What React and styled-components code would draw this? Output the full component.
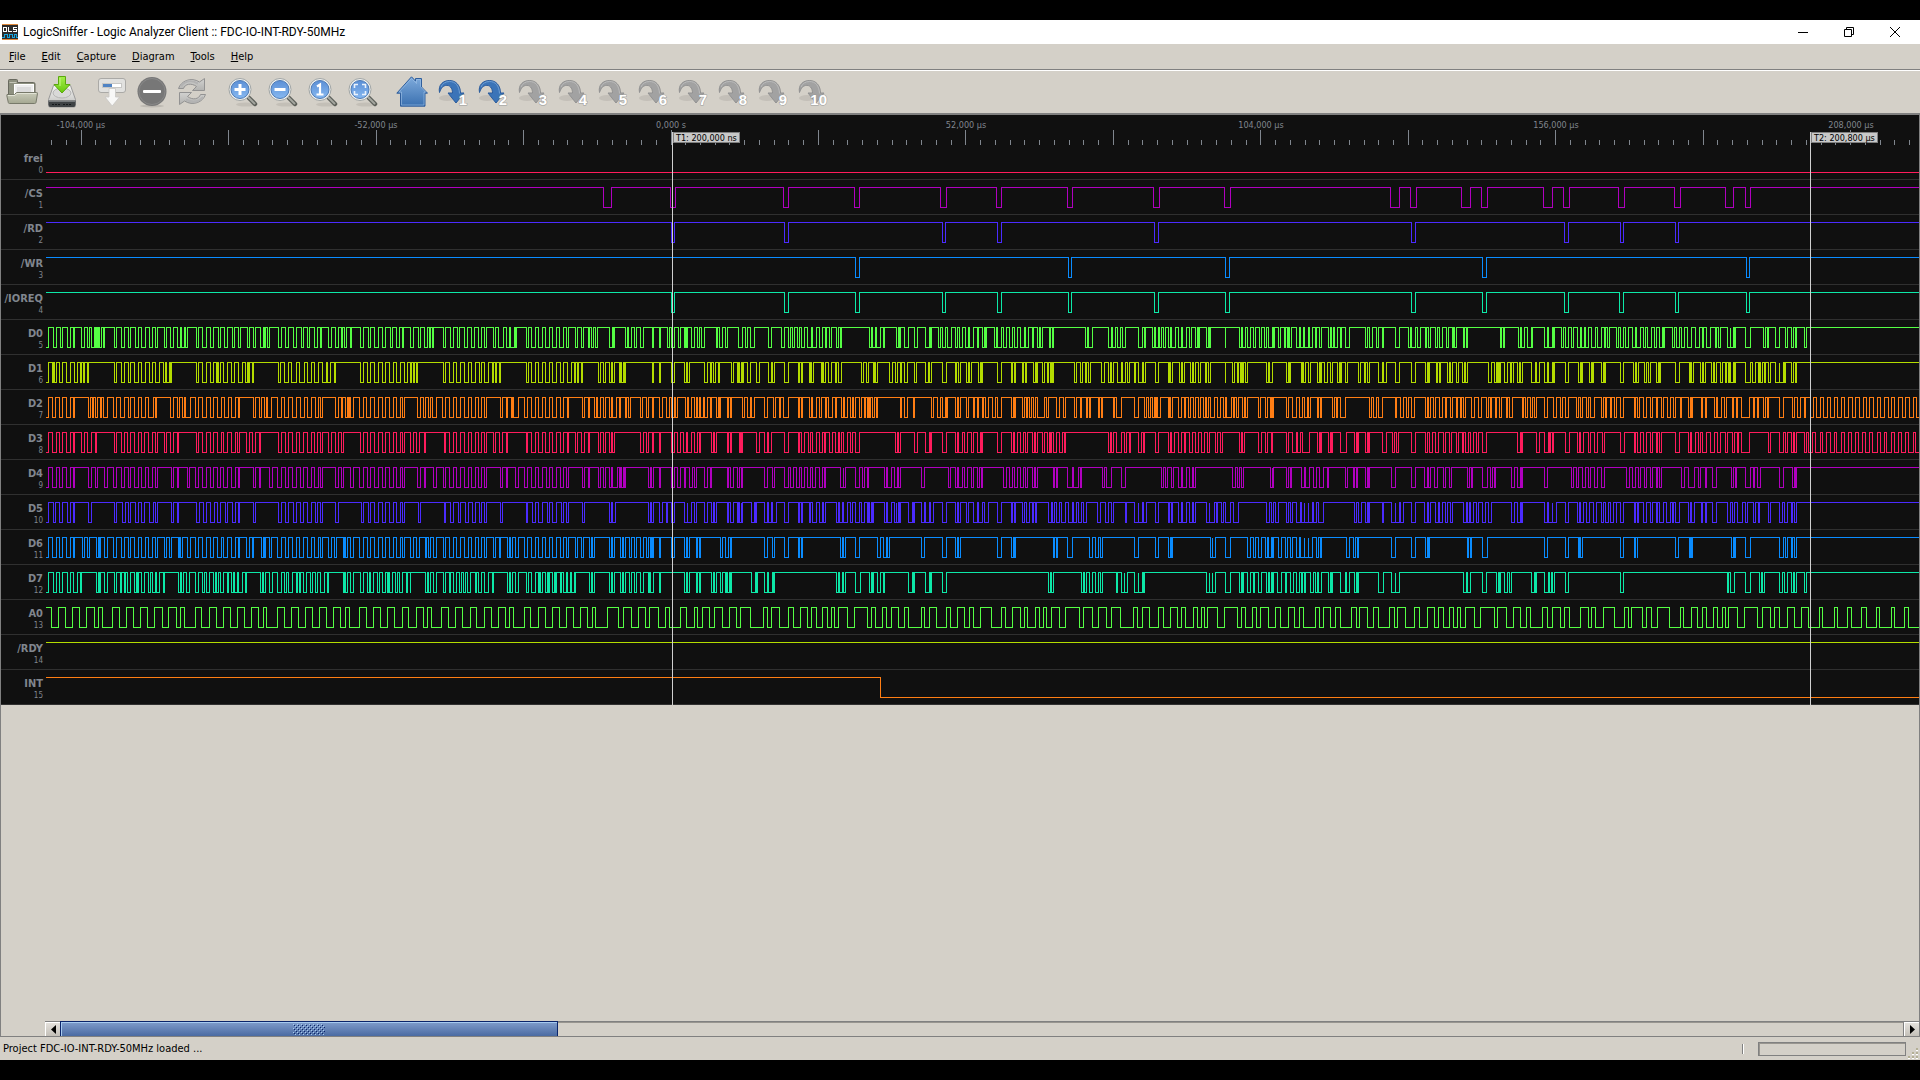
import React from 'react';
import styled, { createGlobalStyle } from 'styled-components';

const GlobalStyle = createGlobalStyle`
  * {
    box-sizing: border-box;
  }

  body {
    margin: 0;
    background: #000;
    font-family: 'DejaVu Sans Condensed', 'DejaVu Sans', sans-serif;
    font-size: 11px;
    color: #000;
  }
`;

const Screen = styled.div`
  display: flex;
  flex-direction: column;
  min-height: 100vh;
  padding: 20px 0;
`;

const Window = styled.div`
  display: flex;
  flex-direction: column;
  flex: 1;
  background: #d4d0c8;
  overflow: hidden;
`;

const TitleBar = styled.header`
  display: flex;
  align-items: center;
  height: 24px;
  padding: 0 2px;
  background: #fff;
`;

const Title = styled.h1`
  flex: 1;
  margin: 0 0 0 5px;
  font-family: Roboto, sans-serif;
  font-size: 12px;
  font-weight: 400;
`;

const WindowButton = styled.button`
  display: flex;
  align-items: center;
  justify-content: center;
  width: 46px;
  height: 20px;
  padding: 0;
  border: 0;
  background: none;
`;

const MenuBar = styled.nav`
  display: flex;
  align-items: center;
  height: 25px;
  padding: 0 1px;
`;

const MenuItem = styled.button`
  padding: 0 8px;
  border: 0;
  background: none;
  font: inherit;
  color: inherit;
`;

const ToolBar = styled.div`
  display: flex;
  align-items: center;
  height: 46px;
  padding: 0 2px;
  border-top: 1px solid #808080;
  border-bottom: 2px solid #808080;
  box-shadow: inset 0 1px 0 #fff;
`;

const ToolButton = styled.button`
  display: flex;
  justify-content: center;
  width: 40px;
  height: 32px;
  padding: 0;
  margin-right: ${({ $last }) => ($last ? 10 : 0)}px;
  border: 0;
  background: none;
`;

const Viewer = styled.main`
  display: flex;
  flex-direction: column;
  flex: 1;
  border: solid #808080;
  border-width: 0 1px 1px;
`;

const Scope = styled.section`
  position: relative;
  background: #101010;
  color: #80868e;
`;

const RulerSvg = styled.svg`
  display: block;
  width: 100%;
  height: 30px;
  font-size: 9px;
  fill: #80868e;
`;

const Channel = styled.div`
  display: flex;
  height: 35px;
  border-bottom: 1px solid #303030;
`;

const ChannelLabel = styled.div`
  display: flex;
  flex-direction: column;
  flex: none;
  align-items: flex-end;
  width: 45px;
  padding: 7px 3px 0 0;
`;

const ChannelName = styled.span`
  font-size: 11px;
  font-weight: 700;
  line-height: 14px;
`;

const ChannelIndex = styled.span`
  font-size: 8px;
  line-height: 10px;
`;

const Trace = styled.svg`
  flex: 1;
  min-width: 0;
  height: 34px;
  fill: none;
  stroke: ${({ $color }) => $color};
`;

const Cursor = styled.div`
  position: absolute;
  top: 17px;
  bottom: 0;
  left: ${({ $x }) => $x}px;
  border-left: 1px solid #d0d0d0;
`;

const CursorFlag = styled.div`
  height: 11px;
  padding: 0 2px;
  border: 1px solid #808080;
  background: #c8c8c8;
  color: #000;
  font-size: 9px;
  line-height: 11px;
  white-space: nowrap;
`;

const ScrollBar = styled.div`
  display: flex;
  height: 15px;
  margin: auto 0 0 44px;
  background: #d4d0c8;
  border-top: 1px solid #808080;
`;

const ScrollButton = styled.button`
  display: flex;
  align-items: center;
  justify-content: center;
  flex: none;
  width: 15px;
  padding: 0;
  border: 0;
  border-top: 1px solid #fff;
  border-left: 1px solid #fff;
  background: linear-gradient(#e4e1dc, #c4c0b8);
`;

const ScrollTrack = styled.div`
  flex: 1;
  border-top: 1px solid #98958f;
  border-right: 1px solid #808080;
`;

const ScrollThumb = styled.div`
  display: flex;
  align-items: center;
  justify-content: center;
  width: 27%;
  height: 15px;
  margin-top: -2px;
  border: 1px solid #0a246a;
  border-bottom: 0;
  box-shadow: inset 1px 1px 0 #a6caf0;
  background: linear-gradient(#7f9ccb, #4a6aa2);
`;

const StatusBar = styled.footer`
  display: flex;
  align-items: center;
  height: 23px;
  padding-left: 3px;
`;

const StatusText = styled.span`
  flex: 1;
`;

const StatusDivider = styled.span`
  width: 2px;
  height: 10px;
  margin-right: 14px;
  border-left: 1px solid #808080;
  background: #fff;
`;

const ProgressBox = styled.div`
  width: 148px;
  height: 14px;
  border: 1px solid #808080;
  box-shadow: inset 1px 1px 0 #98958f;
`;

const COLORS = ['#ff1c5c', '#b000c0', '#4b2bff', '#0a8cff', '#0de8a8', '#55ff44', '#b4dc00', '#ff7e14'];

const LABEL_WIDTH = 46;
const HIGH = 7.5;
const LOW = 27.5;
const TRACE_END = 1919;

// The capture comes in chunks: first pixel of the chunk and its samples per pixel.
const CHUNKS = {
  a: { start: 0, rate: 3 },
  b: { start: 480, rate: 3 },
  c: { start: 960, rate: 3 },
  d: { start: 1440, rate: 3 },
  w: { start: 960, rate: 49 / 30 },
};

// Every "fall-rise" pair is one low pulse, in samples from the start of its chunk.
const CHANNELS = [
  { name: 'frei', a: '138-5760' },
  {
    name: '/CS',
    b: '370-395 571-586 910-926 1123-1138 1381-1399',
    c: '109-125 322-338 580-599 793-812 1291-1319 1351-1370',
    d: '64-90 124-142 310-338 370-389 535-554 703-720 856-881 916-932',
  },
  {
    name: '/RD',
    b: '574-584 913-926 1386-1397',
    c: '112-124 583-596 1354-1366',
    d: '373-386 541-551 706-716',
  },
  { name: '/WR', b: '1126-1139', c: '325-335 796-809', d: '127-139 919-929' },
  {
    name: '/IOREQ',
    b: '574-584 913-926 1126-1139 1386-1397',
    c: '112-124 325-335 583-595 796-808 1354-1366',
    d: '127-139 373-386 538-551 706-716 919-929',
  },
  {
    name: 'D0',
    a: '138-145 161-169 180-187 203-210 221-223 245-252 263-267 275-283 286-289 292-296 299-304 310-314 343-349 365-374 385-391 405-415 425-435 447-457 467-471 493-498 511-520 533-541 544-553 556-562 589-595 608-619 630-640 655-660 672-682 696-703 715-720 742-748 760-766 780-789 793-797 802-808 835-844 856-865 880-889 904-911 922-928 943-952 961-965 985-993 1007-1014 1024-1028 1032-1038 1050-1054 1082-1090 1105-1111 1124-1135 1147-1156 1172-1177 1190-1198 1207-1211 1232-1240 1255-1262 1273-1282 1287-1291 1296-1301 1330-1336 1351-1361 1372-1378 1394-1403 1415-1424 1436-1440',
    b: '0-4 14-19 40-46 55-69 80-88 92-103 107-109 139-145 155-166 176-187 197-208 218-229 239-250 260-266 286-292 305-311 325-329 335-339 347-353 388-396 399-403 436-442 445-454 463-469 481-489 517-521 538-542 563-568 575-583 596-601 613-617 620-623 634-642 652-657 665-673 709-713 717-727 736-742 776-787 797-802 811-823 866-875 905-913 925-931 937-943 952-958 964-973 983-995 998-1009 1018-1026 1036-1040 1048-1054 1069-1075 1080-1084 1168-1173 1177-1186 1189-1201 1210-1213 1249-1255 1258-1262 1274-1285 1303-1311 1337-1348 1352-1354 1375-1381 1387-1397 1403-1413 1427-1433 1438-1440',
    c: '0-7 16-24 28-40 52-55 67-73 76-79 104-108 112-124 130-138 148-158 162-172 181-193 196-205 217-220 232-238 241-247 268-272 277-281 376-382 385-397 446-453 457-465 472-482 486-496 535-547 552-555 576-582 586-595 599-603 609-615 624-630 635-646 656-664 667-679 689-694 706-712 716-719 739-745 748-752 795-797 838-844 847-857 861-871 881-887 897-904 913-920 925-936 941-943 955-961 973-977 981-986 989-995 1009-1018 1021-1031 1034-1045 1049-1057 1066-1070 1077-1084 1105-1111 1114-1121 1124-1132 1141-1145 1157-1169 1217-1222 1229-1236 1250-1256 1267-1271 1306-1318 1346-1352 1355-1366 1372-1381 1395-1400 1405-1412 1427-1431 1437-1440',
    d: '0-7 19-25 36-40 44-49 70-74 79-83 181-185 190-194 235-241 245-252 262-273 276-278 313-321 325-337 341-344 365-370 377-384 393-399 413-420 424-433 436-445 454-466 472-483 493-497 502-507 529-535 541-550 556-565 577-586 589-601 610-616 622-634 643-648 658-667 670-673 697-703 709-717 724-732 742-753 766-779 787-791 799-812 826-830 834-841 862-870 872-880 883-886 916-931 970-976 982-986 1006-1018 1036-1042 1055-1059 1066-1070 1093-1099',
  },
  {
    name: 'D1',
    a: '138-145 157-160 163-169 179-187 199-210 223-232 241-245 249-253 262-266 343-349 365-374 385-392 404-415 425-436 447-457 467-478 490-495 499-508 511-515 589-595 607-619 630-640 649-653 655-660 671-682 694-703 715-726 736-741 745-748 757-761 835-841 853-865 875-889 899-913 922-934 943-955 967-979 982-991 1003-1007 1082-1090 1103-1112 1123-1135 1147-1156 1169-1180 1190-1202 1214-1222 1230-1234 1240-1244 1249-1253 1330-1337 1348-1361 1370-1382 1393-1405 1415-1427 1437-1440',
    b: '0-4 13-25 37-41 45-49 57-62 139-145 154-166 176-187 197-208 218-230 241-250 262-274 284-287 291-295 304-308 355-362 370-376 388-394 397-403 418-422 425-429 432-436 517-520 538-542 575-583 613-618 621-628 673-682 691-695 701-706 715-719 754-760 772-776 779-783 787-790 802-812 830-838 865-874 878-883 913-925 955-959 964-968 988-992 995-1000 1024-1028 1031-1036 1046-1054 1066-1070 1076-1084 1145-1150 1160-1165 1180-1183 1187-1193 1229-1237 1247-1252 1261-1265 1274-1283 1303-1310 1337-1346 1348-1354 1387-1400 1426-1430 1435-1440',
    c: '0-2 20-24 28-34 55-60 63-68 112-124 154-158 163-167 187-191 195-199 220-226 229-233 247-253 262-266 270-274 277-281 343-350 362-367 376-380 384-392 425-434 445-450 454-460 472-484 486-496 502-508 523-525 535-547 550-555 587-595 625-629 632-637 658-663 667-672 691-696 700-706 715-720 736-740 745-752 795-797 817-824 832-836 840-844 846-849 856-862 919-924 928-936 979-984 987-992 1024-1028 1031-1036 1045-1052 1072-1077 1081-1084 1093-1103 1111-1117 1132-1138 1141-1145 1157-1162 1195-1202 1213-1217 1221-1228 1255-1267 1269-1279 1306-1318 1354-1366 1397-1401 1405-1409 1429-1433 1437-1440',
    d: '0-2 23-27 30-36 49-55 67-72 76-83 145-153 164-168 171-175 178-182 193-202 211-215 219-221 232-238 241-248 275-286 288-297 313-322 325-336 340-344 376-386 415-420 424-428 448-453 456-461 484-489 492-496 541-550 580-586 589-594 613-618 625-630 649-654 658-662 706-718 748-752 755-761 781-786 790-795 814-819 822-828 841-846 856-860 864-869 872-880 883-887 916-931 937-945 955-959 962-968 973-976 984-991 1006-1018 1019-1030 1033-1037 1055-1060 1066-1070',
  },
  {
    name: 'D2',
    a: '138-145 157-166 178-187 199-211 219-224 265-272 276-279 285-291 300-305 309-321 340-350 361-374 385-392 404-415 425-436 446-459 465-470 512-520 531-537 546-552 555-570 585-595 607-619 630-640 652-663 673-684 694-706 714-719 760-767 777-783 793-798 802-815 832-844 853-865 877-889 900-912 922-934 945-955 961-966 1006-1014 1023-1028 1036-1041 1044-1048 1051-1060 1078-1090 1100-1112 1123-1135 1147-1156 1168-1180 1190-1201 1207-1214 1252-1260 1270-1276 1286-1292 1296-1309 1327-1337 1348-1361 1370-1382 1393-1405 1415-1425 1436-1440',
    b: '0-5 13-19 61-68 79-83 94-98 100-116 133-142 154-166 175-186 197-208 218-229 241-250 261-266 308-314 325-329 343-349 352-362 370-376 388-394 397-409 417-421 436-440 445-450 481-488 499-505 517-520 538-548 559-568 575-583 586-592 616-621 625-634 643-648 652-658 662-670 673-683 691-695 709-714 718-722 742-746 751-755 787-794 802-812 815-824 853-863 880-887 897-902 909-925 955-959 964-968 988-993 997-1009 1018-1025 1035-1040 1045-1056 1066-1068 1084-1090 1093-1102 1111-1117 1121-1125 1139-1145 1153-1157 1162-1166 1168-1172 1177-1182 1189-1193 1261-1265 1273-1283 1300-1304 1354-1361 1372-1381 1387-1397 1400-1403 1427-1431 1435-1440',
    w: '0-1 11-14 22-24 28-30 36-38 41-47 53-58 61-67 84-87 89-90 102-106 108-110 113-117 120-123 126-138 142-145 158-163 169-173 187-190 196-199 206-209 211-213 226-228 231-233 250-252 256-264 285-291 302-304 308-311 315-317 319-321 323-327 340-342 344-347 357-362 367-369 373-377 381-385 389-393 397-401 403-406 409-415 420-425 431-434 436-443 447-449 452-455 462-464 467-470 488-491 499-503 507-509 510-512 533-537 543-549 555-560 562-567 569-572 584-586 588-590 609-611 615-617 621-629 669-672 676-680 684-690 711-713 719-725 730-733 737-743 760-763 766-768 774-777 783-788 793-795 801-804 811-813 817-819 822-825 836-840 847-851 860-863 866-868 875-877 881-885 892-894 898-902 918-920 924-927 932-935 939-942 955-960 970-975 981-984 989-994 1007-1011 1014-1017 1023-1027 1030-1037 1047-1051 1054-1056 1062-1064 1069-1073 1078-1084 1101-1104 1106-1110 1117-1121 1127-1131 1137-1139 1145-1149 1155-1160 1166-1169 1176-1179 1190-1193 1195-1197 1211-1213 1218-1220 1232-1236 1238-1243 1248-1252 1261-1264 1268-1270 1276-1290 1296-1298 1303-1305 1313-1315 1319-1320 1338-1345 1360-1363 1368-1373 1379-1381 1389-1394 1399-1405 1411-1417 1422-1428 1434-1440 1445-1451 1457-1463 1469-1475 1481-1486 1492-1498 1503-1510 1516-1521 1527-1533 1539-1544 1551-1557 1563-1567',
  },
  {
    name: 'D3',
    a: '138-145 157-169 179-187 199-211 219-224 245-253 263-275 286-290 343-350 363-374 383-391 404-415 425-434 445-457 466-472 493-500 511-520 532-536 589-596 607-619 630-640 652-663 671-682 694-706 713-719 738-748 758-767 778-782 836-845 855-865 877-889 899-911 922-934 943-953 961-966 985-993 1005-1014 1023-1029 1082-1090 1102-1112 1123-1136 1147-1157 1169-1180 1190-1201 1207-1214 1232-1239 1249-1258 1273-1277 1332-1337 1348-1361 1370-1382 1393-1404 1415-1425 1436-1440',
    b: '0-4 13-18 40-47 57-68 79-83 139-143 153-166 175-187 197-208 217-230 241-251 261-266 286-292 303-313 325-329 355-362 371-376 388-393 397-403 481-489 499-505 517-520 538-542 575-583 592-600 610-618 622-635 643-652 657-661 694-700 703-709 742-746 751-755 778-782 785-788 829-838 853-861 865-874 913-926 955-959 964-973 985-992 996-1009 1018-1028 1032-1037 1048-1056 1066-1075 1078-1085 1091-1102 1111-1117 1126-1138 1247-1252 1256-1262 1303-1312 1337-1348 1350-1355 1387-1400 1427-1431 1435-1440',
    w: '0-4 8-13 19-22 28-33 35-37 61-67 84-87 89-94 99-103 107-111 118-122 124-126 135-138 143-146 148-150 152-157 162-168 170-172 242-245 248-251 256-264 269-272 277-279 291-297 299-301 319-324 340-343 346-351 357-362 367-369 375-379 384-389 395-400 404-408 417-420 426-429 457-460 462-464 488-492 499-503 508-511 533-537 543-549 551-556 559-571 584-587 589-590 602-605 607-608 622-631 645-648 649-651 662-666 667-669 690-697 706-710 713-717 738-744 760-764 767-771 777-781 789-793 799-803 811-814 821-823 826-830 834-838 844-847 853-860 911-915 917-919 942-946 955-961 963-965 967-970 989-995 1009-1012 1014-1019 1026-1030 1037-1041 1049-1052 1079-1085 1101-1104 1106-1112 1117-1121 1127-1131 1138-1140 1143-1145 1169-1175 1190-1193 1195-1201 1206-1210 1213-1220 1226-1232 1237-1242 1250-1254 1261-1265 1270-1272 1276-1290 1320-1324 1338-1345 1348-1352 1358-1361 1363-1366 1380-1382 1386-1393 1397-1405 1409-1416 1421-1428 1432-1439 1444-1451 1456-1463 1468-1474 1479-1486 1491-1498 1503-1510 1514-1521 1526-1533 1538-1544 1549-1557 1561-1567',
  },
  {
    name: 'D4',
    a: '138-145 157-169 178-187 199-211 219-224 265-274 286-291 313-322 340-350 363-374 385-392 404-415 425-436 446-457 466-472 513-521 532-536 561-569 587-596 607-619 630-640 652-661 671-682 694-706 714-719 760-767 778-782 808-817 832-844 855-865 877-889 900-911 922-934 943-955 961-966 1006-1015 1023-1029 1051-1060 1079-1091 1102-1112 1123-1135 1147-1156 1169-1180 1190-1201 1208-1214 1252-1260 1272-1277 1300-1309 1329-1337 1348-1361 1370-1380 1393-1405 1415-1425 1436-1440',
    b: '0-4 13-19 61-68 79-83 107-115 133-143 154-166 176-187 199-208 217-230 241-251 260-266 308-314 325-329 355-362 370-376 388-394 397-411 418-422 425-429 433-437 505-511 514-520 538-542 575-583 592-601 612-616 627-636 643-650 673-682 690-694 742-746 751-760 772-778 784-788 853-863 878-883 913-925 932-940 948-958 963-973 983-992 996-1007 1018-1028 1032-1037 1082-1089 1090-1097 1126-1138 1147-1153 1162-1166 1213-1219 1222-1234 1243-1252 1256-1261 1325-1334 1406-1412 1426-1431 1435-1440',
    w: '0-4 8-13 19-22 28-32 35-37 71-76 81-85 89-94 99-103 107-111 118-121 124-126 153-155 158-160 176-184 186-193 197-198 232-236 240-248 264-270 329-332 335-339 345-349 357-362 364-370 375-380 382-384 445-450 453-457 460-463 507-510 511-512 533-537 540-542 558-562 565-571 578-582 587-593 600-602 630-633 642-645 648-650 662-665 667-669 705-711 738-744 759-763 765-768 775-780 789-793 799-803 829-832 835-837 853-862 866-869 873-875 901-905 911-915 917-919 955-960 998-1002 1007-1011 1016-1021 1026-1030 1037-1041 1047-1052 1089-1093 1098-1104 1109-1112 1118-1122 1127-1131 1137-1139 1143-1145 1179-1184 1190-1200 1206-1210 1217-1220 1229-1236 1260-1264 1266-1268 1283-1291 1296-1298 1303-1307 1338-1345 1360-1363 1365-1367',
  },
  {
    name: 'D5',
    a: '138-145 160-167 178-187 202-211 219-224 265-273 343-350 368-377 385-392 407-416 425-434 448-459 466-472 513-521 532-536 589-597 611-619 632-642 652-660 676-682 697-706 714-719 760-767 836-845 856-866 880-888 901-911 922-933 946-952 961-966 1006-1014 1083-1091 1105-1112 1123-1134 1147-1156 1168-1180 1190-1202 1207-1214 1256-1261 1332-1337 1350-1360 1374-1382 1395-1405 1418-1427 1437-1440',
    b: '0-4 13-19 61-68 139-143 158-166 175-187 202-208 217-230 244-251 260-266 308-314 388-394 398-407 505-511 514-520 538-547 559-563 575-583 614-621 623-634 643-649 673-682 694-700 703-709 742-746 751-760 772-776 779-783 785-788 814-824 827-830 853-861 865-874 878-890 913-926 955-959 964-968 988-992 996-1009 1018-1028 1031-1036 1069-1075 1078-1087 1091-1103 1111-1117 1126-1138 1145-1153 1162-1166 1169-1173 1177-1181 1213-1219 1222-1234 1243-1248 1250-1256 1259-1262 1286-1297 1300-1304 1325-1334 1337-1348 1351-1361 1387-1399 1427-1431 1435-1440',
    w: '0-1 11-14 22-28 30-36 40-47 61-67 84-86 89-90 102-106 108-113 118-120 123-125 145-149 151-154 157-162 166-172 177-184 186-191 193-198 201-206 225-229 237-243 247-251 270-272 285-291 292-298 299-304 319-324 340-342 345-347 357-362 364-370 375-380 382-384 403-407 408-415 419-421 427-431 434-442 447-455 501-505 508-512 516-520 533-537 540-543 550-556 557-562 563-569 570-576 578-582 586-594 645-648 651-655 662-665 667-669 690-692 705-711 712-718 719-724 738-744 759-763 766-768 777-781 783-788 793-797 801-804 823-827 829-832 834-838 844-847 853-859 863-868 901-905 911-915 917-919 955-960 962-967 968-974 989-994 1009-1012 1014-1018 1024-1028 1034-1040 1047-1051 1054-1060 1063-1068 1072-1073 1079-1084 1101-1104 1106-1108 1117-1121 1127-1131 1137-1139 1143-1149 1154-1160 1164-1166 1169-1175 1190-1193 1195-1200 1211-1213 1217-1219 1229-1235 1254-1258 1261-1265 1270-1278 1283-1287 1296-1299 1304-1306 1320-1324 1338-1344 1347-1351 1358-1360 1363-1366',
  },
  {
    name: 'D6',
    a: '138-145 157-169 178-187 199-211 219-224 246-253 262-267 289-294 297-302 312-322 340-350 363-374 385-392 404-415 425-436 446-457 466-471 494-500 508-514 534-538 540-548 563-570 586-595 607-619 630-640 652-663 671-682 694-706 714-719 740-748 757-761 785-789 792-796 808-815 832-844 855-865 877-889 898-911 922-934 943-955 961-966 985-993 1004-1008 1030-1034 1037-1041 1051-1061 1079-1090 1102-1112 1123-1136 1147-1156 1169-1180 1190-1201 1208-1214 1232-1240 1249-1257 1275-1280 1285-1290 1300-1309 1329-1337 1348-1361 1370-1382 1393-1405 1415-1425 1436-1440',
    b: '0-4 13-19 40-46 57-61 82-88 90-98 107-116 133-143 154-166 176-187 197-208 217-230 241-251 260-266 286-292 304-310 328-334 338-343 388-394 397-403 422-427 430-437 448-454 463-469 481-490 500-506 511-515 517-521 538-542 574-583 613-618 621-628 649-653 657-661 721-728 736-745 751-755 853-863 878-883 913-925 955-959 964-968 1082-1087 1089-1097 1126-1138 1192-1201 1210-1219 1223-1229 1325-1334 1387-1399 1426-1431 1435-1440',
    w: '0-1 61-67 84-87 89-91 153-155 158-159 176-184 212-217 222-226 229-233 285-291 319-324 341-344 345-347 409-412 413-417 433-442 470-474 479-482 488-492 499-503 504-509 510-512 520-525 531-535 539-543 549-555 556-562 563-569 570-576 582-586 588-590 631-636 643-646 649-651 705-711 738-744 760-763 765-767 829-831 833-836 853-861 955-959 989-994 1010-1012 1014-1017 1079-1084 1101-1104 1106-1107 1169-1174 1191-1193 1195-1196 1260-1263 1265-1267 1283-1291 1338-1345 1348-1352 1358-1360 1363-1366',
  },
  {
    name: 'D7',
    a: '138-145 160-169 178-187 202-211 220-232 241-245 289-294 298-301 313-322 343-349 361-365 373-377 383-391 402-410 413-416 425-434 446-451 457-466 470-478 490-492 535-540 543-549 559-569 587-595 608-613 619-629 640-646 649-655 661-671 682-686 694-699 703-712 714-727 736-739 782-787 790-796 808-817 832-844 853-860 865-876 888-892 897-902 910-919 930-936 945-952 961-973 982-986 1030-1034 1037-1041 1051-1060 1081-1091 1102-1107 1111-1120 1133-1138 1147-1156 1162-1166 1169-1178 1187-1191 1198-1208 1219-1222 1230-1232 1275-1281 1286-1290 1300-1308 1329-1337 1347-1352 1359-1368 1378-1383 1389-1396 1403-1411 1425-1428 1434-1440',
    b: '0-4 13-25 37-39 82-88 91-97 107-115 139-145 154-166 175-178 181-187 197-202 206-209 217-223 226-229 241-245 250-258 262-270 274-283 285-287 328-334 338-343 388-394 397-403 422-427 430-437 448-454 463-469 481-490 505-509 511-520 538-542 613-619 621-628 649-653 657-661 694-699 703-709 721-727 736-740 743-747 751-755 814-827 829-832 853-861 865-877 880-884 1069-1075 1078-1087 1090-1096 1126-1141 1168-1173 1177-1180 1192-1201 1210-1213 1286-1297 1300-1304 1337-1348 1350-1355 1387-1398',
    w: '145-148 150-153 199-202 204-206 212-216 222-226 229-233 256-258 264-268 269-273 285-291 292-298 299-301 403-407 408-412 413-417 433-442 457-460 461-463 470-474 480-481 488-493 501-504 506-509 510-512 518-525 531-533 540-544 550-555 557-560 563-565 572-577 581-584 586-590 602-605 607-608 622-630 631-636 645-648 650-651 684-691 705-711 712-718 823-827 829-833 853-860 876-879 881-883 890-894 898-901 934-938 940-942 955-962 963-966 968-971 989-994 1079-1084 1254-1256 1258-1265 1283-1291 1306-1309 1311-1314 1338-1344 1346-1351 1358-1361 1363-1366 1379-1382',
  },
  {
    name: 'A0',
    a: '155-175 197-217 238-259 284-294 307-337 358-379 400-421 442-463 486-505 529-541 554-586 605-628 648-671 690-712 733-754 776-790 800-832 853-874 895-916 937-958 979-1000 1022-1036 1048-1078 1099-1120 1141-1162 1183-1207 1226-1249 1271-1282 1294-1324 1345-1366 1387-1411 1430-1440',
    b: '0-13 33-55 76-88 100-132 152-174 196-217 238-259 281-301 323-337 347-382 415-430 454-475 496-508 535-556 568-600 619-642 653-667 689-703 727-748 769-781 811-850 862-874 898-925 940-961 982-994 1008-1027 1042-1054 1063-1075 1102-1122 1161-1174 1187-1207 1220-1234 1256-1273 1284-1323 1334-1348 1369-1399 1412-1432',
    w: '8-15 22-33 51-68 75-86 99-105 111-123 130-137 142-149 163-173 195-201 217-227 239-247 262-283 290-298 309-325 333-344 355-362 368-381 388-394 399-405 420-432 453-459 466-477 484-491 504-516 524-536 547-554 561-580 587-593 605-614 621-640 647-653 666-675 683-702 710-715 728-743 751-763 775-781 789-799 806-813 818-826 840-850 873-878 892-904 915-925 932-952 959-967 980-987 995-1013 1026-1032 1038-1051 1069-1085 1092-1097 1114-1122 1129-1140 1159-1176 1182-1194 1205-1212 1219-1231 1238-1245 1250-1256 1270-1282 1303-1310 1324-1331 1338-1351 1363-1375 1386-1404 1409-1428 1433-1450 1456-1473 1480-1497 1502-1521 1526-1543 1549-1567',
  },
  { name: '/RDY' },
  { name: 'INT', b: '1201-4320' },
];

const tracePath = (channel) => {
  let path = '';
  let last = LABEL_WIDTH;
  Object.keys(CHUNKS).forEach((key) => {
    if (!channel[key]) return;
    const { start, rate } = CHUNKS[key];
    channel[key].split(' ').forEach((pulse) => {
      const [fall, rise] = pulse
        .split('-')
        .map((sample) => Math.min(start + Math.floor(sample / rate), TRACE_END));
      const x0 = fall - LABEL_WIDTH + 0.5;
      const x1 = rise - LABEL_WIDTH + 0.5;
      // a pulse that goes on from the previous chunk has no edge between them
      if (fall > last) path += `H${x0}V${LOW}`;
      else if (fall === LABEL_WIDTH) path = `M0 ${LOW}`;
      else path += `V${LOW}`;
      path += rise < TRACE_END && !(rate === 3 && Number(pulse.split('-')[1]) === 1440)
        ? `H${x1}V${HIGH}`
        : `H${x1}`;
      last = rise;
    });
  });
  if (!path.startsWith('M')) path = `M0 ${HIGH}${path}`;
  return last < TRACE_END ? `${path}H${TRACE_END - LABEL_WIDTH}` : path;
};

const TICK = 14.745;
const ZERO = 670;
const TICKS = Array.from({ length: 127 }, (_, i) => i - 42);
const TIMES = ['-104,000 µs', '-52,000 µs', '0,000 s', '52,000 µs', '104,000 µs', '156,000 µs', '208,000 µs'];

const Ruler = () => (
  <RulerSvg shapeRendering="crispEdges">
    {TICKS.map((n) => {
      const height = n % 10 === 0 ? 15 : 5;
      return <rect key={n} x={Math.floor(ZERO + n * TICK)} y={30 - height} width="1" height={height} />;
    })}
    {TIMES.map((time, i) => (
      <text key={time} x={Math.round(ZERO + (i - 2) * 20 * TICK)} y="13" textAnchor="middle">{time}</text>
    ))}
  </RulerSvg>
);

const Gradients = () => (
  <svg width="0" height="0" style={{ position: 'absolute' }} aria-hidden="true">
    <defs>
      <linearGradient id="blue" x1="0" y1="0" x2="0" y2="1">
        <stop offset="0" stopColor="#7fabdc" />
        <stop offset="1" stopColor="#3a70b0" />
      </linearGradient>
      <linearGradient id="lens" x1="0" y1="0" x2="0" y2="1">
        <stop offset="0" stopColor="#5b8fd6" />
        <stop offset="1" stopColor="#86b8f0" />
      </linearGradient>
      <linearGradient id="metal" x1="0" y1="0" x2="0" y2="1">
        <stop offset="0" stopColor="#f6f6f4" />
        <stop offset="1" stopColor="#bcbcba" />
      </linearGradient>
      <linearGradient id="arrows" x1="0" y1="0" x2="0" y2="1">
        <stop offset="0" stopColor="#d2d2d0" />
        <stop offset="1" stopColor="#b2b2b0" />
      </linearGradient>
      <linearGradient id="folder" x1="0" y1="0" x2="0" y2="1">
        <stop offset="0" stopColor="#c9cbb9" />
        <stop offset="1" stopColor="#a4a792" />
      </linearGradient>
      <linearGradient id="green" x1="0" y1="0" x2="0" y2="1">
        <stop offset="0" stopColor="#a4ee4c" />
        <stop offset="1" stopColor="#66c90c" />
      </linearGradient>
    </defs>
  </svg>
);

const Icon = ({ children }) => <svg width="32" height="32" viewBox="0 0 32 32" aria-hidden="true">{children}</svg>;

const OpenIcon = () => (
  <Icon>
    <path d="M2.500 22V4.500q0-1 1-1h7q1 0 1 1v2h16q1.500 0 1.500 1.500V22z" fill="#8d907f" stroke="#68695e" />
    <path d="M3.500 6.500h7" stroke="#c3c5b7" />
    <rect x="8.500" y="8.500" width="19" height="12" fill="#eee" stroke="#fff" />
    <path d="M11 11h14v8H11z" fill="#dcdcdc" />
    <path d="M1 18.500h7.500l2-2h20q1.200 0 1 1l-1.500 9q-.2 1-1.500 1H3.500q-1 0-1.200-1l-1.500-7z" fill="url(#folder)" stroke="#77796a" />
    <path d="M2 19.500h7l2-2h19" fill="none" stroke="#e1e3d5" />
  </Icon>
);

const SaveIcon = () => (
  <Icon>
    <path d="M7.500 9.500h17l5 14v6q0 1.500-1.500 1.500H4q-1.500 0-1.500-1.500v-6z" fill="url(#metal)" stroke="#999" />
    <ellipse cx="16" cy="17" rx="9" ry="5" fill="#d9d9d8" stroke="#b5b5b4" />
    <path d="M2.500 24.500h27v4q0 2.500-2 2.500h-23q-2 0-2-2.500z" fill="#3e4244" />
    <path d="M3 25.500h26" stroke="#777b7d" />
    <path d="M6 28.500h8M17 28.500h9" stroke="#15191b" strokeDasharray="2 1" />
    <path d="M12.500.5h7v8h4.500l-8 8.500-8-8.500h4.500z" fill="url(#green)" stroke="#5aa80e" />
    <path d="M14 2v8" stroke="#c7f889" />
  </Icon>
);

const CaptureIcon = () => (
  <Icon>
    <rect x="2.500" y="2.500" width="27" height="14" rx="2.500" fill="#e1e1df" stroke="#aaa9a6" />
    <rect x="6.500" y="7.500" width="19" height="4" fill="#fff" stroke="#c7c7c5" />
    <path d="M7 8h9v3H7z" fill="#4f83c4" />
    <path d="M13 12.500h6.500V21h4L16.200 30 9 21h4z" fill="#f8f8f7" stroke="#c8c7c4" strokeWidth=".8" />
  </Icon>
);

const StopIcon = () => (
  <Icon>
    <ellipse cx="16" cy="30" rx="12" ry="1.500" fill="#bdb9b2" />
    <circle cx="16" cy="15.500" r="14.500" fill="#777" />
    <circle cx="16" cy="15.500" r="13" fill="none" stroke="#888" />
    <rect x="7" y="14" width="18" height="3" rx="1" fill="#fff" />
  </Icon>
);

const RefreshIcon = () => (
  <Icon>
    <path d="M2.500 12.500C5 5 15 .5 23.500 6l5-3.500v12H16.500l4-4C15 6.500 9 8 7.500 12.500z" fill="url(#arrows)" stroke="#929292" />
    <path d="M29.500 18.500C27 26 17 30.500 8.500 25l-5 3.500v-12h12l-4 4c5.500 4 11.500 2.500 13-2z" fill="url(#arrows)" stroke="#929292" />
    <path d="M5 10Q12 2 22 7.500M27 21q-7 8-17 2.500" fill="none" stroke="#b3b3b3" strokeWidth="2" />
  </Icon>
);

const ZoomIcon = ({ children }) => (
  <Icon>
    <ellipse cx="20" cy="28.500" rx="10" ry="2" fill="#c3bfb7" />
    <path d="M22.500 21.500l6.500 6.500" stroke="#5b5e58" strokeWidth="4.500" strokeLinecap="round" />
    <path d="M22.500 21.500l6 6" stroke="#a5a7a0" strokeWidth="2" strokeLinecap="round" />
    <circle cx="14" cy="13.500" r="11" fill="#f0f1ef" stroke="#a0a5a5" />
    <circle cx="14" cy="13.500" r="9" fill="url(#lens)" stroke="#4c7ab5" />
    {children}
  </Icon>
);

const HomeIcon = () => (
  <Icon>
    <path d="M15.500.8l4 4.200V2.500h6v8.500l6 6.200H29v13H4.500v-13H.8z" fill="url(#blue)" stroke="#2f5e9c" />
    <path d="M15.500 2.500L3 16h2.500v13H28V16h1.500l-5-5.500v-7h-4v4z" fill="none" stroke="#9fc2e8" opacity=".6" />
  </Icon>
);

const CursorIcon = ({ number, disabled }) => (
  <Icon>
    <ellipse cx="11" cy="22" rx="8" ry="3" fill="#c3bfb8" />
    <path
      d="M3.500 16.500C2 9 7 4.500 13.500 4.500S24.500 9.500 24.500 17H28l-8 10-8-10h4.500c0-5-3-8.500-7-7.500C5.500 10.500 5 13 3.500 16.500z"
      fill={disabled ? '#a2a2a2' : '#3b74b8'}
      stroke={disabled ? '#929292' : '#2a5b9c'}
    />
    <path d="M5 11q2.500-5.500 8.500-5.500c6 0 9.500 4 10 12" fill="none" stroke={disabled ? '#bbb' : '#6f9fd4'} />
    <text
      x="31"
      y="29"
      textAnchor="end"
      fontFamily="Liberation Sans, sans-serif"
      fontSize="15"
      fontWeight="700"
      fill="#fff"
      stroke="#999"
      strokeWidth="1"
      paintOrder="stroke"
    >
      {number}
    </text>
  </Icon>
);

const TOOLS = [
  { label: 'Open project', icon: <OpenIcon /> },
  { label: 'Save project', icon: <SaveIcon />, last: true },
  { label: 'Begin capture', icon: <CaptureIcon /> },
  { label: 'Stop capture', icon: <StopIcon />, disabled: true },
  { label: 'Repeat capture', icon: <RefreshIcon />, disabled: true, last: true },
  { label: 'Zoom in', icon: <ZoomIcon><path d="M14 8v11M8.500 13.500h11" stroke="#fff" strokeWidth="3" /></ZoomIcon> },
  { label: 'Zoom out', icon: <ZoomIcon><path d="M8.500 13.500h11" stroke="#fff" strokeWidth="3" /></ZoomIcon> },
  { label: 'Zoom to original', icon: <ZoomIcon><path d="M11 10.500l3-2v10M10.500 18.500h7" fill="none" stroke="#fff" strokeWidth="2.200" /></ZoomIcon> },
  {
    label: 'Zoom to fit',
    icon: <ZoomIcon><path d="M8.500 12V8.500H12M16 8.500h3.500V12M19.500 15v3.500H16M12 18.500H8.500V15" fill="none" stroke="#eaf2fc" strokeWidth="1.600" /></ZoomIcon>,
    last: true,
  },
  { label: 'Go to trigger', icon: <HomeIcon /> },
  ...[1, 2, 3, 4, 5, 6, 7, 8, 9, 10].map((number) => ({
    label: `Go to cursor ${number}`,
    icon: <CursorIcon number={number} disabled={number > 2} />,
    disabled: number > 2,
  })),
];

const MENUS = ['File', 'Edit', 'Capture', 'Diagram', 'Tools', 'Help'];

const App = () => (
  <Screen>
    <GlobalStyle />
    <Gradients />
    <Window>
      <TitleBar>
        <svg width="16" height="16" shapeRendering="crispEdges" aria-hidden="true">
          <rect width="16" height="16" fill="#2c2c2c" />
          <path d="M0 .5h16M0 15.500h16" stroke="#e08a3c" />
          <path d="M1.500 3.500h3v4h-3zM6.500 3v4.500H10M15 3.500h-3.500v2h3v2H11" fill="none" stroke="#fff" />
          <path d="M0 13.500h2.500v-3h3v3h2v-3h3v3h2v-3h2v3H16" fill="none" stroke="#19a5dc" />
        </svg>
        <Title>LogicSniffer - Logic Analyzer Client :: FDC-IO-INT-RDY-50MHz</Title>
        <WindowButton aria-label="Minimize">
          <svg width="10" height="10"><path d="M0 5.500h10" stroke="#000" /></svg>
        </WindowButton>
        <WindowButton aria-label="Restore">
          <svg width="10" height="10" fill="none" stroke="#000"><path d="M.5 2.500h7v7h-7zM2.500 2.500v-2h7v7h-2" /></svg>
        </WindowButton>
        <WindowButton aria-label="Close">
          <svg width="10" height="10"><path d="M0 0l10 10M10 0L0 10" stroke="#000" /></svg>
        </WindowButton>
      </TitleBar>
      <MenuBar>
        {MENUS.map((menu) => <MenuItem key={menu}><u>{menu[0]}</u>{menu.slice(1)}</MenuItem>)}
      </MenuBar>
      <ToolBar>
        {TOOLS.map(({ label, icon, disabled, last }) => (
          <ToolButton key={label} aria-label={label} disabled={disabled} $last={last}>{icon}</ToolButton>
        ))}
      </ToolBar>
      <Viewer>
        <Scope>
          <Ruler />
          {CHANNELS.map((channel, i) => (
            <Channel key={channel.name}>
              <ChannelLabel>
                <ChannelName>{channel.name}</ChannelName>
                <ChannelIndex>{i}</ChannelIndex>
              </ChannelLabel>
              <Trace $color={COLORS[i % COLORS.length]} shapeRendering="crispEdges">
                <path d={tracePath(channel)} />
              </Trace>
            </Channel>
          ))}
          <Cursor $x={671}><CursorFlag>T1: 200,000 ns</CursorFlag></Cursor>
          <Cursor $x={1809}><CursorFlag>T2: 200,800 µs</CursorFlag></Cursor>
        </Scope>
        <ScrollBar>
          <ScrollButton aria-label="Scroll left">
            <svg width="5" height="9"><path d="M5 0v9L0 4.500z" /></svg>
          </ScrollButton>
          <ScrollTrack>
            <ScrollThumb>
              <svg width="32" height="11" shapeRendering="crispEdges" aria-hidden="true">
                <defs>
                  <pattern id="grip" width="4" height="4" patternUnits="userSpaceOnUse">
                    <path d="M0 0h1v1H0zM2 2h1v1H2z" fill="#a6caf0" />
                    <path d="M1 1h1v1H1zM3 3h1v1H3z" fill="#0a246a" />
                  </pattern>
                </defs>
                <rect width="32" height="11" fill="url(#grip)" />
              </svg>
            </ScrollThumb>
          </ScrollTrack>
          <ScrollButton aria-label="Scroll right">
            <svg width="5" height="9"><path d="M0 0v9l5-4.500z" /></svg>
          </ScrollButton>
        </ScrollBar>
      </Viewer>
      <StatusBar>
        <StatusText>Project FDC-IO-INT-RDY-50MHz loaded ...</StatusText>
        <StatusDivider />
        <ProgressBox role="progressbar" aria-label="Capture progress" />
        <svg width="14" height="23" shapeRendering="crispEdges" aria-hidden="true">
          <path d="M10 12h2v2h-2zM6 16h2v2H6zM10 16h2v2h-2zM2 20h2v2H2zM6 20h2v2H6zM10 20h2v2h-2z" fill="#fff" />
          <path d="M10 11h2v2h-2zM6 15h2v2H6zM10 15h2v2h-2zM2 19h2v2H2zM6 19h2v2H6zM10 19h2v2h-2z" fill="#b3af95" />
        </svg>
      </StatusBar>
    </Window>
  </Screen>
);

export default App;
